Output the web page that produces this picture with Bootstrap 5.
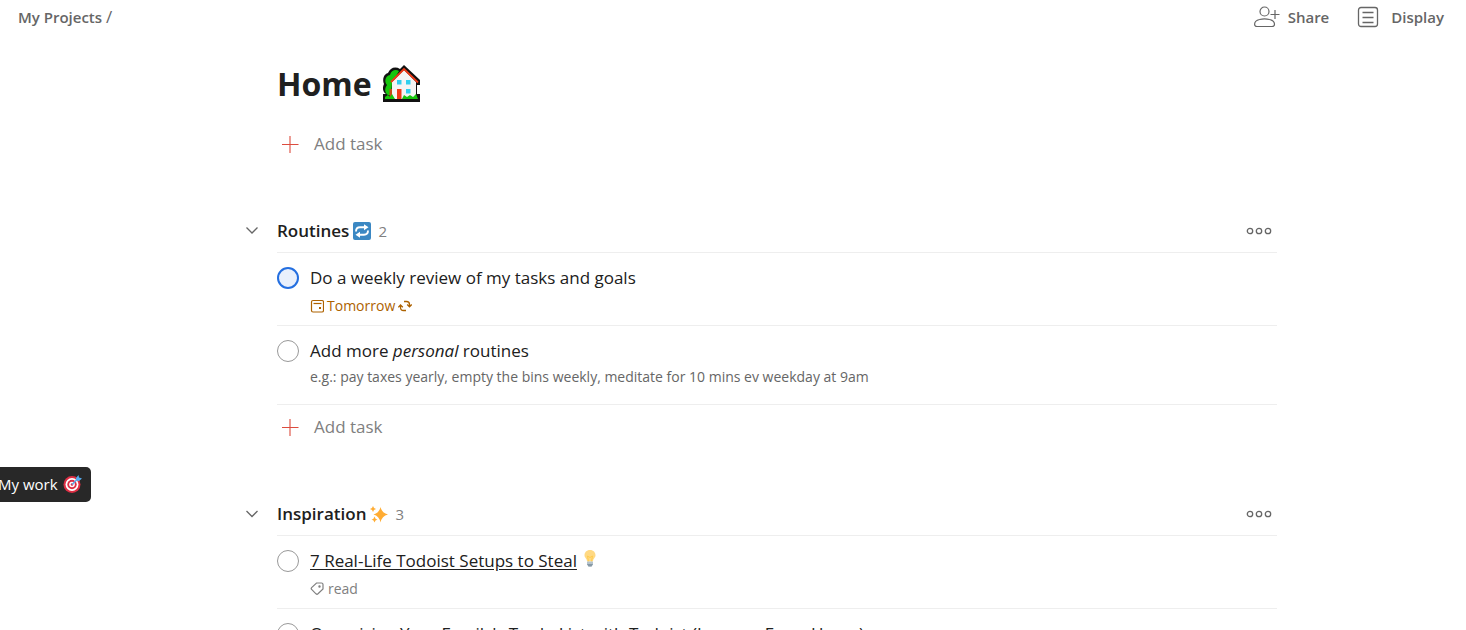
<!DOCTYPE html>
<html lang="en">
<head>
<meta charset="utf-8">
<meta name="viewport" content="width=device-width, initial-scale=1">
<title>Home</title>
<link href="https://cdn.jsdelivr.net/npm/bootstrap@5.3.0/dist/css/bootstrap.min.css" rel="stylesheet">
<style>
body { font-family: "Open Sans", "Noto Sans", sans-serif; color: #202020; background: #fff; font-size: 17px; line-height: 24px; }
svg { display: block; flex: none; }
.topbar { height: 34px; padding: 0 22px 0 18px; font-size: 15px; font-weight: 600; color: #666; }
.topbar a, .topbar button { color: #666; font-weight: 600; }
.slash { font-size: 17px; font-weight: 400; }
.plain { border: 0; background: none; padding: 0; color: inherit; font: inherit; }
.board { padding: 26px 0 0 88px; }
.column { max-width: 1000px; }
.board h1 { font-size: 32px; line-height: 48px; font-weight: 700; margin: 0 0 18px; gap: 10px; }
.add-task { height: 36px; gap: 14px; padding-left: 4px; color: #808080; }
.section { margin-top: 48px; position: relative; }
.section-head { height: 43px; border-bottom: 1px solid #eee; }
.section-head h2 { font-size: 17px; line-height: 24px; font-weight: 600; margin: 0; -webkit-text-stroke: 0; }
.count { font-size: 15px; color: #808080; margin-left: 7px; }
.more { margin-right: 5px; }
.fold { position: absolute; left: -32px; top: 14px; }
.task { padding: 13px 0 9px; gap: 11px; border-bottom: 1px solid #eee; }
.task.noted { padding-bottom: 17px; }
.task input { appearance: none; flex: none; width: 22px; height: 22px; margin: 1px 0 0; border: 1px solid #999; border-radius: 50%; background: #fff; }
.task input.priority { border: 2px solid #246fe0; background: #e9f0fc; }
.task a.title { color: #202020; text-underline-offset: 2px; }
.meta { font-size: 14px; line-height: 20px; margin-top: 6px; gap: 4px; color: #808080; }
.meta.due { color: #ad6200; gap: 3px; }
.note { font-size: 14px; line-height: 20px; margin-top: 4px; color: #666; }
.section .add-task { margin-top: 4px; }
.hint { position: absolute; left: -10px; top: 467px; height: 35px; padding: 0 9px 2px 8px; border-radius: 5px; background: #282828; color: #fff; font-size: 15px; gap: 5px; }
</style>
</head>
<body>
<div class="vh-100 overflow-hidden position-relative">
  <header class="topbar d-flex justify-content-between align-items-center">
    <nav aria-label="Breadcrumb"><a href="#" class="text-decoration-none">My Projects</a> <span class="slash">/</span></nav>
    <div class="d-flex align-items-center">
      <button type="button" class="plain d-flex align-items-center gap-2 me-4">
        <svg width="26" height="22" viewBox="0 0 26 22" fill="none" stroke="#666" stroke-width="1.2"><circle cx="10.500" cy="5.500" r="4.500"/><path d="M5.500 13.500C8.500 12.700 12.500 12.700 15.500 13.500C18.500 14.200 20.500 16 20.500 18.300C20.500 19.800 19.500 20.500 18 20.500H3C1.500 20.500.6 19.800.6 18.300C.6 16 2.500 14.200 5.500 13.500ZM16.500 8.500H25.500M21 4V13"/></svg>
        <span>Share</span>
      </button>
      <button type="button" class="plain d-flex align-items-center ms-1">
        <svg class="me-2" width="22" height="22" viewBox="0 0 22 22" fill="none" stroke="#666" stroke-width="1.300"><rect x="1.500" y="1.500" width="19" height="19" rx="2.500"/><path d="M5.500 6.500H16.500M5.500 11.500H16.500M5.500 16.500H16.500"/></svg>
        <span class="ms-1">Display</span>
      </button>
    </div>
  </header>

  <main class="board">
    <div class="column mx-auto">
      <h1 class="d-flex align-items-center">Home
        <svg width="39" height="38" viewBox="0 0 39 38" role="img" aria-label="house with garden"><path d="M1 37V29H4C1 27 0 23 2 19C0 14 2 9 6 8C8 3 13 1 18 4L22 0L38 15V20H35V29H38V37Z" fill="#111"/><path d="M9 30H6C3 28 2 24 5 20C2 17 3 11 8 10C9 5 14 4 17 6L10 18Z" fill="#16c60c"/><path d="M7.500 24H10V32H7.500Z" fill="#c54b16"/><path d="M10 17L22 5L34 17V34H10Z" fill="#f4f4f4"/><path d="M9 17L22 4L36 17.500" fill="none" stroke="#f03a17" stroke-width="1.800"/><path d="M15 24H19.500V34H15Z" fill="#f03a17"/><path d="M15 15H19.500V19.500H15ZM24 15H28.500V19.500H24ZM24 24H28.500V28.500H24Z" fill="#30cfee"/><path d="M3 34V32L6 30L8 32L10 29L13 34ZM20 34L22 30L25 32L28 30L31 32L34 29L36 34Z" fill="#16c60c"/></svg>
      </h1>
      <button type="button" class="plain add-task d-flex align-items-center">
        <svg width="19" height="18" viewBox="0 0 19 18" stroke="#dc4c3e" stroke-width="1.100"><path d="M1 9.500H17.500M9 1V18"/></svg>Add task
      </button>

      <section class="section">
        <div class="section-head d-flex align-items-center">
          <button type="button" class="plain fold" aria-label="Collapse Routines"><svg width="14" height="14" viewBox="0 0 14 14" fill="none" stroke="#666" stroke-width="1.300"><path d="M1.500 3.500L7 9L12.500 3.500"/></svg></button>
          <h2 class="d-flex align-items-center gap-1">Routines
            <svg width="18" height="18" viewBox="0 0 18 18" role="img" aria-label="repeat"><rect width="18" height="18" rx="2" fill="#3b88c3"/><path d="M3 9.500C3 6.500 4.500 5.300 7 5.300H12M15 8.500C15 11.500 13.500 12.700 11 12.700H6" fill="none" stroke="#fff" stroke-width="1.900"/><path d="M11 2.300L15.500 5.300L11 8.300ZM7 9.700L2.500 12.700L7 15.700Z" fill="#fff"/></svg>
          </h2>
          <span class="count">2</span>
          <button type="button" class="plain more ms-auto" aria-label="More actions for Routines"><svg width="26" height="8" viewBox="0 0 26 8" fill="none" stroke="#666" stroke-width="1.300"><circle cx="4" cy="4" r="2.700"/><circle cx="13" cy="4" r="2.700"/><circle cx="22" cy="4" r="2.700"/></svg></button>
        </div>
        <div class="task d-flex align-items-start">
          <input type="checkbox" id="task-review" class="priority">
          <div>
            <label class="d-block" for="task-review">Do a weekly review of my tasks and goals</label>
            <div class="meta due d-flex align-items-center">
              <svg width="14" height="14" viewBox="0 0 14 14" fill="none" stroke="#ad6200" stroke-width="1.200"><rect x="1.500" y="1.500" width="12" height="11.500" rx="1.500"/><path d="M3.500 4.500H11.500"/><path d="M9 9H11" stroke-width="2"/></svg>
              <span>Tomorrow</span>
              <svg width="14" height="14" viewBox="0 0 14 14" fill="none" stroke="#ad6200" stroke-width="1.300"><path d="M6 2.500H8.500Q11.500 2.500 11.500 5.500V7.500M8 11.500H5.500Q2.500 11.500 2.500 8.500V6.500M9.200 5.500L11.500 7.800L13.700 5.500M.3 8.300L2.500 6L4.800 8.300"/></svg>
            </div>
          </div>
        </div>
        <div class="task noted d-flex align-items-start">
          <input type="checkbox" id="task-more">
          <div>
            <label class="d-block" for="task-more">Add more <em>personal</em> routines</label>
            <div class="note">e.g.: pay taxes yearly, empty the bins weekly, meditate for 10 mins ev weekday at 9am</div>
          </div>
        </div>
        <button type="button" class="plain add-task d-flex align-items-center">
          <svg width="19" height="18" viewBox="0 0 19 18" stroke="#dc4c3e" stroke-width="1.100"><path d="M1 9.500H17.500M9 1V18"/></svg>Add task
        </button>
      </section>

      <section class="section">
        <div class="section-head d-flex align-items-center">
          <button type="button" class="plain fold" aria-label="Collapse Inspiration"><svg width="14" height="14" viewBox="0 0 14 14" fill="none" stroke="#666" stroke-width="1.300"><path d="M1.500 4L7 9.500L12.500 4"/></svg></button>
          <h2 class="d-flex align-items-center gap-1">Inspiration
            <svg width="18" height="18" viewBox="0 0 18 18" fill="#ffac33" role="img" aria-label="sparkles"><path d="M10.500 2Q11.800 8 18 9.500Q11.800 11 10.500 17.500Q9.200 11 3.500 9.500Q9.200 8 10.500 2Z"/><path d="M3 1Q3.500 3.500 6 4Q3.500 4.500 3 7Q2.500 4.500 0 4Q2.500 3.500 3 1ZM4.500 11.500Q5 14 7.500 14.500Q5 15 4.500 17.500Q4 15 1.500 14.500Q4 14 4.500 11.500Z"/></svg>
          </h2>
          <span class="count">3</span>
          <button type="button" class="plain more ms-auto" aria-label="More actions for Inspiration"><svg width="26" height="8" viewBox="0 0 26 8" fill="none" stroke="#666" stroke-width="1.300"><circle cx="4" cy="4" r="2.700"/><circle cx="13" cy="4" r="2.700"/><circle cx="22" cy="4" r="2.700"/></svg></button>
        </div>
        <div class="task d-flex align-items-start">
          <input type="checkbox" id="task-setups" aria-label="7 Real-Life Todoist Setups to Steal">
          <div>
            <div class="d-flex gap-1"><a href="#" class="title">7 Real-Life Todoist Setups to Steal</a>
              <svg width="18" height="18" viewBox="0 0 18 18" role="img" aria-label="light bulb"><path d="M9 1C5.500 1 3.500 3.500 3.500 6.300C3.500 9 6 9.500 6 12.500H12C12 9.500 14.500 9 14.500 6.300C14.500 3.500 12.500 1 9 1Z" fill="#ffd983"/><path d="M7.500 12.500L6.500 7L9 8.500L11.500 7L10.500 12.500" fill="none" stroke="#ffcc4d" stroke-width="1"/><path d="M6 12.500H12V15.500L10.500 17.500H7.500L6 15.500Z" fill="#b5c3cc"/><path d="M6 15H12L10.500 17.500H7.500Z" fill="#8799a5"/></svg>
            </div>
            <div class="meta d-flex align-items-center">
              <svg width="14" height="14" viewBox="0 0 14 14" fill="none" stroke="#808080" stroke-width="1.200"><path d="M6.500 1H11.500Q13 1 13 2.500V7L8 11.800Q7 12.700 6 11.800L1.600 7.300Q.8 6.500 1.600 5.600Z"/><circle cx="9.500" cy="4.500" r=".6" fill="#808080"/></svg>
              <span>read</span>
            </div>
          </div>
        </div>
        <div class="task d-flex align-items-start">
          <input type="checkbox" id="task-family">
          <label for="task-family">Organizing Your Family's To-do List with Todoist (Lessons From Home)</label>
        </div>
      </section>
    </div>
  </main>

  <div class="hint d-flex align-items-center" role="tooltip">My work
    <svg width="19" height="18" viewBox="0 0 19 18" role="img" aria-label="target"><circle cx="9" cy="9.500" r="8.500" fill="#dd2e44"/><circle cx="9" cy="9.500" r="6.500" fill="#fff"/><circle cx="9" cy="9.500" r="4.700" fill="#dd2e44"/><circle cx="9" cy="9.500" r="2.800" fill="#fff"/><circle cx="9" cy="9.500" r="1.300" fill="#dd2e44"/><path d="M9 9.500L15 3.500" stroke="#55acee" stroke-width="1.500"/><path d="M13 5.500V3L15.500 0L16 2.500L19 3.500L16 6Z" fill="#55acee"/></svg>
  </div>
</div>
<script src="https://cdn.jsdelivr.net/npm/bootstrap@5.3.0/dist/js/bootstrap.bundle.min.js"></script>
</body>
</html>
